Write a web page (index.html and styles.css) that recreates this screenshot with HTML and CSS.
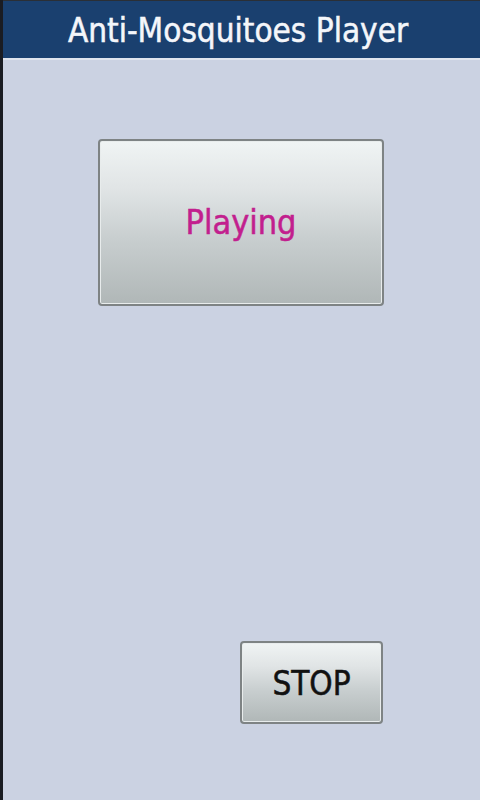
FILE: index.html
```html
<!DOCTYPE html>
<html>
<head>
<meta charset="utf-8">
<link rel="stylesheet" href="styles.css">
</head>
<body>
<div class="screen">
  <div class="titlebar"><span class="title">Anti-Mosquitoes Player</span></div>
  <div class="content">
    <div class="status-row">
      <div class="btn big"><span class="playing">Playing</span></div>
    </div>
    <div class="stop-row">
      <div class="btn small"><span class="stop">STOP</span></div>
    </div>
  </div>
</div>
</body>
</html>
```
FILE: styles.css
```css
html, body {
  margin: 0;
  padding: 0;
  width: 480px;
  height: 800px;
  overflow: hidden;
}
.screen {
  width: 480px;
  height: 800px;
  box-sizing: border-box;
  border-left: 3px solid #1a1c22;
  background: #cbd2e2;
  display: flex;
  flex-direction: column;
  font-family: "DejaVu Sans Condensed", "DejaVu Sans", sans-serif;
}
.titlebar {
  height: 57px;
  background: #1a406f;
  border-top: 1px solid #2a2f36;
  border-bottom: 2px solid #dfe4ee;
  box-sizing: content-box;
  display: flex;
  align-items: center;
  justify-content: center;
}
.title {
  color: #f4f6fa;
  font-size: 33px;
  -webkit-text-stroke: 0.5px #f4f6fa;
  margin-left: -7px;
  margin-top: 2px;
}
.content {
  flex: 1;
  display: flex;
  flex-direction: column;
  padding: 79px 97px 0 95px;
}
.btn {
  box-sizing: border-box;
  border: 2px solid #7e8384;
  border-radius: 4px;
  background: linear-gradient(#f0f4f4 0%, #e0e4e5 30%, #c8cecf 60%, #b0b7b7 100%);
  display: flex;
  align-items: center;
  justify-content: center;
  box-shadow: inset 0 0 0 1px #e8ecec;
}
.big {
  width: 286px;
  height: 167px;
}
.playing {
  color: #c21f8e;
  font-size: 34px;
  -webkit-text-stroke: 0.5px #c21f8e;
  margin-top: -1px;
}
.stop-row {
  margin-top: auto;
  margin-bottom: 76px;
  display: flex;
  justify-content: flex-end;
}
.small {
  width: 143px;
  height: 83px;
}
.stop {
  color: #111;
  font-size: 33px;
  -webkit-text-stroke: 0.5px #111;
  margin-top: 2px;
}
```
